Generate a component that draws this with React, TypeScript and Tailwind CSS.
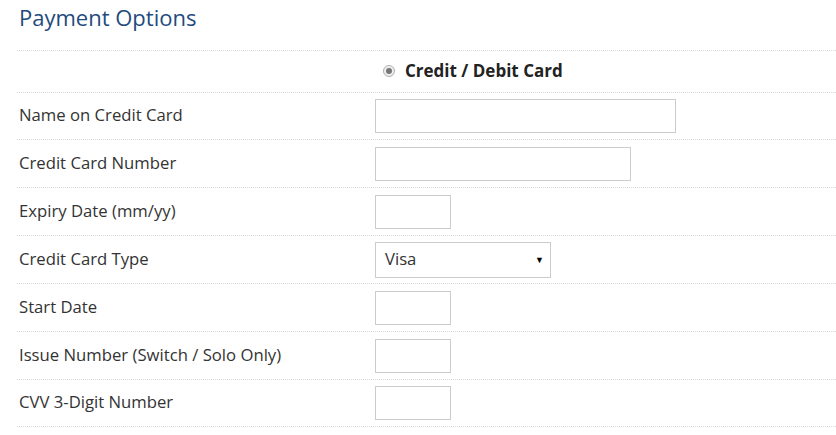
const rows: { label: string; kind: 'input' | 'select'; width: string }[] = [
  { label: 'Name on Credit Card', kind: 'input', width: 'w-[301px]' },
  { label: 'Credit Card Number', kind: 'input', width: 'w-[256px]' },
  { label: 'Expiry Date (mm/yy)', kind: 'input', width: 'w-[76px]' },
  { label: 'Credit Card Type', kind: 'select', width: 'w-[176px]' },
  { label: 'Start Date', kind: 'input', width: 'w-[76px]' },
  { label: 'Issue Number (Switch / Solo Only)', kind: 'input', width: 'w-[76px]' },
  { label: 'CVV 3-Digit Number', kind: 'input', width: 'w-[76px]' },
];

export default function App() {
  return (
    <div className="w-[836px] h-[435px] bg-white pl-[17px] font-['Open_Sans',sans-serif] text-[#333] overflow-hidden">
      <h2 className="pl-[2px] pt-[3px] h-[50px] text-[22px] leading-[28px] text-[#1f4b7e]">Payment Options</h2>

      {/* Payment method */}
      <div className="flex items-center h-[42px] border-t border-dotted border-[#d8d8d8]">
        <div className="w-[358px]" />
        <label className="flex items-center gap-[10px] pl-[8px]">
          <span className="w-[12px] h-[12px] rounded-full border border-[#b0b0b0] bg-[#eee] flex items-center justify-center -mt-[1px]">
            <span className="w-[6px] h-[6px] rounded-full bg-[#777]" />
          </span>
          <span className="text-[17px] font-bold text-[#222] -mt-[2px]">Credit / Debit Card</span>
        </label>
      </div>

      {rows.map((r, i) => (
        <div
          key={r.label}
          className={`flex items-center ${i === 0 ? 'h-[47px]' : 'h-[48px]'} border-t border-dotted border-[#d8d8d8] ${
            i === rows.length - 1 ? 'border-b' : ''
          }`}
        >
          <div className="w-[358px] pl-[2px] text-[16.7px] -mt-[2px]">{r.label}</div>
          {r.kind === 'input' ? (
            <input className={`${r.width} h-[34px] border border-[#ccc] bg-white outline-none`} />
          ) : (
            <div className={`relative ${r.width} h-[36px] border border-[#ccc] bg-white flex items-center pl-[9px] text-[16.7px]`}>
              <span className="-mt-[2px]">Visa</span>
              <span className="absolute right-[6px] top-[12px] text-[9px] leading-none text-black">▼</span>
            </div>
          )}
        </div>
      ))}
    </div>
  );
}
